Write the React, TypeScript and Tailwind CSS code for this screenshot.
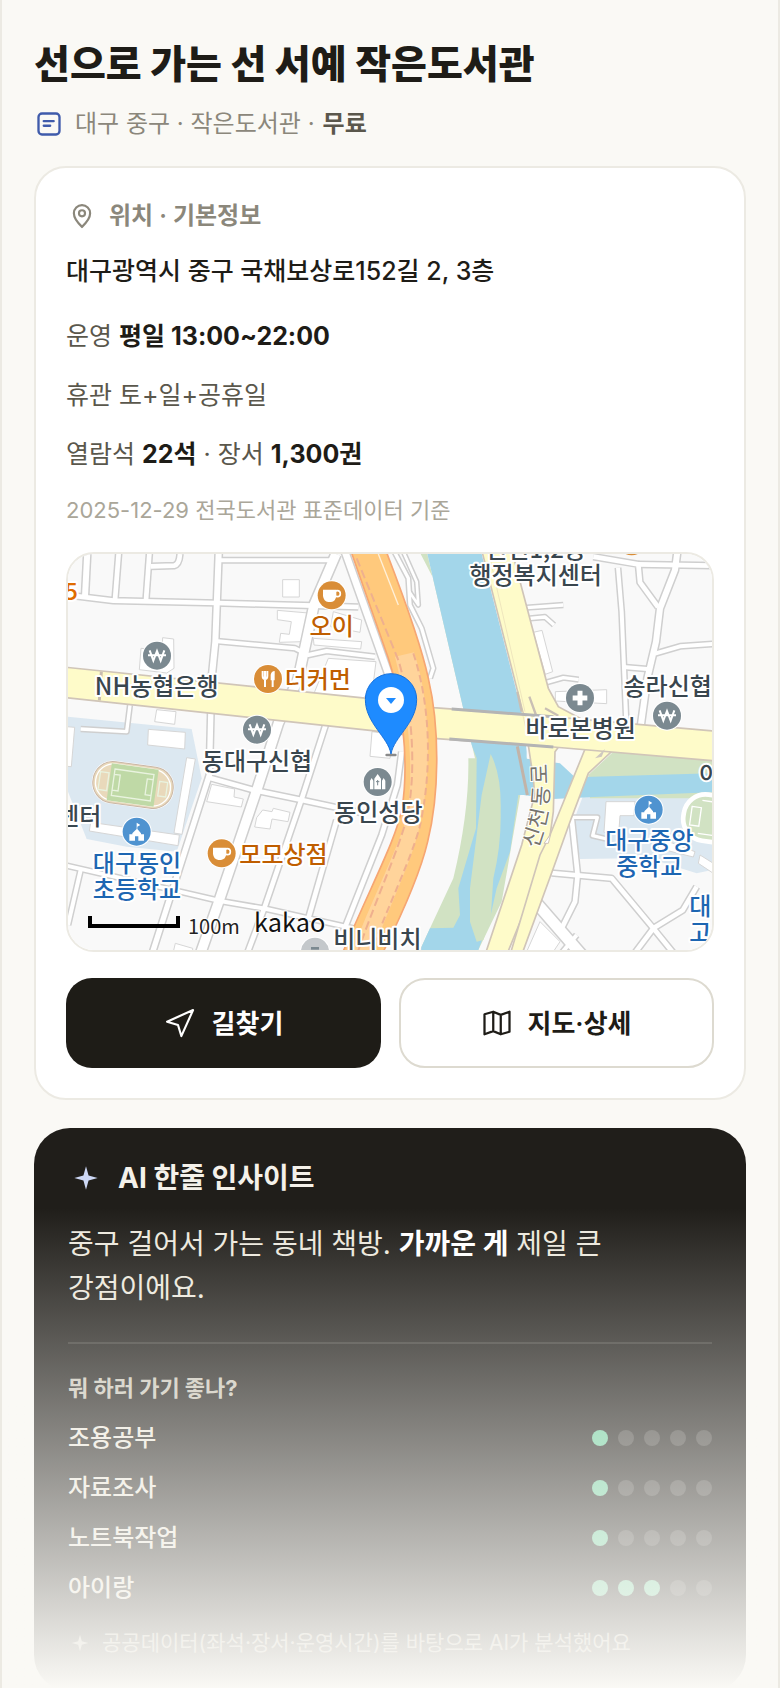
import React from "react";

type Road = [string, number];

const roads: Road[] = [
  ["M83 0L75 155", 18],
  ["M178 0L165 165", 14],
  ["M270 0L258 165", 14],
  ["M20 150L160 167L470 174L760 182L895 186", 14],
  ["M272 64L342 62Q358 58 360 27", 14],
  ["M477 0L466 290L455 400", 18],
  ["M480 46L810 46", 12],
  ["M465 288L705 310L745 330L800 318L945 335", 12],
  ["M453 480L448 690L275 1230", 16],
  ["M800 530L725 762L612 1092L560 1230", 14],
  ["M448 698L580 735L725 765L910 805", 14],
  ["M20 962L360 1040L480 1068L620 1092L880 1150", 12],
  ["M62 975L24 1140", 12],
  ["M830 825L745 1120", 14],
  ["M1025 620L1012 720L965 870L850 1160", 14],
  ["M855 20L990 400", 20],
  ["M1003 20L1045 100L1050 180L1085 250L1120 370L1110 400", 10],
  ["M1048 140L1075 180L1070 110L1030 20", 8],
  ["M210 480L200 560L62 552", 10],
  ["M1600 35L1735 58L1740 112L1794 186", 14],
  ["M1735 58L1960 62", 14],
  ["M1852 20L1845 75L1800 190L1788 290L1762 400L1740 560", 18],
  ["M1674 68L1685 200L1700 560", 12],
  ["M1690 366L1770 373", 12],
  ["M1785 326L1860 304L1960 297", 12],
  ["M1400 188L1510 180", 10],
  ["M1410 220L1455 216L1482 240", 10],
  ["M1460 412L1510 398L1556 404", 10],
  ["M1535 820L1553 990L1545 1070L1505 1150", 14],
  ["M1475 984L1655 1000L1780 1150L1845 1230", 14],
  ["M1720 1230L1780 1150L1868 1096L1910 1025", 14],
  ["M1500 1230L1550 1170", 12],
  ["M1535 817L1612 817L1598 872L1640 882", 10],
];

const wideRoads: Road[] = [
  ["M828 27L762 180L715 400L655 535L592 730L478 1065L420 1230", 28],
  ["M1430 1075L1565 1230", 32],
];

const buildings = [
  "M668 104H718V156H668Z",
  "M652 196L745 204L728 290L658 292L662 265L688 268L694 230L652 224Z",
  "M243 310L306 315L308 278L341 282L342 370L320 384L238 374Z",
  "M290 494L348 500L344 538L284 530Z",
  "M265 553L376 562L374 612L263 600Z",
  "M380 638L406 642L366 868L342 864Z",
  "M20 545L44 547L34 665L20 664Z",
  "M92 832L358 870L354 902L88 858Z",
  "M455 718L524 732L522 756L550 762L544 786L440 770Z",
  "M608 795L636 800L640 790L690 802L684 830L636 822L630 852L584 846L590 818Z",
  "M805 340L948 350L938 430L900 470L760 450Z",
  "M820 200L905 225L900 262L812 245Z",
  "M760 280L905 290L902 312L762 300Z",
  "M936 560L1000 568L990 640L930 634Z",
  "M1420 262L1446 256L1478 380L1456 388Z",
  "M1486 440L1640 434V476L1486 468Z",
  "M1638 770L1725 770L1722 812L1680 812L1676 868L1632 862Z",
  "M1800 880L1905 920L1900 936L1795 910Z",
  "M1920 930L1960 955V985L1915 955Z",
  "M1440 1130L1500 1190L1480 1220H1400Z",
  "M346 1195L398 1210V1220H340Z",
];

type LabelProps = { x: number; y: number; color?: string; anchor?: "start" | "middle" | "end"; children: string };

function Label({ x, y, color = "#39464e", anchor = "middle", children }: LabelProps) {
  return (
    <text
      x={x}
      y={y}
      fill={color}
      textAnchor={anchor}
      stroke="#fff"
      strokeWidth={12}
      strokeLinejoin="round"
      paintOrder="stroke"
      fontSize={72}
      className="font-['Noto_Sans_CJK_KR',sans-serif] font-medium"
    >
      {children}
    </text>
  );
}

function Poi({ x, y, color, children }: { x: number; y: number; color: string; children: React.ReactNode }) {
  return (
    <g transform={`translate(${x} ${y})`}>
      <circle r={45} fill="#fff" />
      <circle r={42} fill={color} />
      {children}
    </g>
  );
}

const Won = () => (
  <path d="M-22 -16L-11 15L0 -14L11 15L22 -16M-27 -1H27" fill="none" stroke="#fff" strokeWidth={6} />
);
const Cup = () => (
  <g>
    <path d="M-26 -17H14V2Q12 18 -2 20H-10Q-24 18 -26 2Z" fill="#fff" />
    <circle cx={17} cy={-5} r={9} fill="none" stroke="#fff" strokeWidth={5} />
  </g>
);
const School = () => (
  <path d="M0 -27V-8L-13 5V8H-22V27H-5V14H5V27H22V8H13V5L2 -8V-15L11 -20Z" fill="#fff" />
);
const Church = () => (
  <g>
    <path d="M0 -24L10 -10V22H-10V-10ZM-23 -4L-18 -12L-13 -4V22H-23ZM13 -4L18 -12L23 -4V22H13Z" fill="#fff" />
    <path d="M0 -6V10M-5 -1H5" stroke="#7b8990" strokeWidth={3} />
  </g>
);

function MapDrawing() {
  const grey = "#7b8990";
  const orange = "#d98d37";
  const blue = "#4f93d0";
  return (
    <svg viewBox="24 27 1932 1188" preserveAspectRatio="xMidYMid slice" className="block h-full w-full" role="img" aria-label="지도">
      <rect x={0} y={0} width={2000} height={1300} fill="#f9f9f9" />
      <path d="M24 515L395 552L425 700L350 920L200 905L80 882L24 740Z" fill="#dce8f1" />
      <path d="M1570 750L1956 745V975L1910 985L1800 950L1720 940L1560 942L1540 830Z" fill="#dce8f1" />
      <path d="M1082 27L1102 27L1205 470L1245 640H1225Q1228 800 1180 1000L1110 1150L1080 1215H1255L1325 1070L1400 640Z" fill="#d1e2c3" />
      <path d="M1102 27H1265L1390 520L1400 620L1400 750H1375L1350 920L1310 1030L1290 1120L1255 1215H1080L1110 1150L1180 1148L1200 1110L1195 1030L1248 850L1250 640L1235 600L1205 470Z" fill="#a3d6ea" />
      <path d="M1292 627Q1325 690 1322 800Q1324 900 1300 1000L1292 1120L1270 1185L1250 1190L1230 1130L1230 1030L1265 750Z" fill="#d1e2c3" />
      <path d="M1585 690L1660 620L1960 645V760H1590Z" fill="#d1e2c3" />
      <path d="M1390 640L1500 655L1545 697L1956 685V742L1600 756L1480 762L1390 750Z" fill="#a3d6ea" />
      <g fill="#fff" stroke="#d6d6d6" strokeWidth={3}>
        {buildings.map((d) => (
          <path key={d} d={d} />
        ))}
      </g>
      <g fill="none" stroke="#cfcfcf" strokeLinejoin="round">
        {[...roads, ...wideRoads].map(([d, w]) => (
          <path key={d} d={d} strokeWidth={w + 9} />
        ))}
      </g>
      <g fill="none" stroke="#fff" strokeLinejoin="round">
        {[...roads, ...wideRoads].map(([d, w]) => (
          <path key={d} d={d} strokeWidth={w} />
        ))}
      </g>

      <g transform="translate(219 720) rotate(8)">
        <rect x={-124} y={-65} width={248} height={130} rx={62} fill="#fff" />
        <rect x={-121} y={-62} width={242} height={124} rx={60} fill="#e9d9bb" stroke="#c9b6a6" strokeWidth={3} />
        <rect x={-113} y={-55} width={226} height={110} rx={54} fill="none" stroke="#fff" strokeWidth={4} />
        <rect x={-72} y={-56} width={142} height={112} fill="#bfd9a6" />
        <path d="M-60 -40H58V40H-60ZM-60 -24H-42V24H-60M58 -24H40V24H58M-102 -26H-76V28H-102ZM78 -22H102V22H78Z" fill="none" stroke="#e9f3df" strokeWidth={4} />
      </g>
      <g transform="translate(1950 820) rotate(8)">
        <rect x={-80} y={-70} width={190} height={140} rx={66} fill="#d1e2c3" stroke="#fff" strokeWidth={14} />
        <path d="M-58 -28H-30V28H-58ZM-30 -50H80M-30 50H80" fill="none" stroke="#fff" strokeWidth={4} />
      </g>

      <g stroke="#d0c5b8" strokeWidth={5} fill="#fefbc9">
        <path d="M1265 15L1392 515L1420 700L1424 750L1385 900L1275 1230H1340L1462 930L1480 800L1485 620L1560 520L1495 485L1465 430L1355 15Z" />
        <path d="M1580 600L1470 870L1440 930L1350 1230H1385L1480 970L1530 830L1585 685L1665 610V590Z" />
        <path d="M10 366L930 461L1120 488L1480 515L1530 520L1970 559V648L1480 606L1120 580L930 556L10 457Z" />
      </g>
      <path d="M1385 515L1545 524L1600 600L1415 596Z" fill="#fefbc9" />
      <path d="M1290 40L1395 500M1372 440L1400 560M1410 460L1430 520" fill="none" stroke="#efe6bd" strokeWidth={3} />
      <path d="M1408 455L1428 510M1455 490L1495 512M1372 440L1385 500" fill="none" stroke="#c9bfb4" strokeWidth={7} />
      <path d="M1175 492L1480 515M1168 582L1480 606" fill="none" stroke="#b4b4b4" strokeWidth={9} />
      <path d="M1372 604L1402 750" stroke="#c2b3a8" strokeWidth={9} />
      <path d="M124 380L118 466" stroke="#c9bcae" strokeWidth={9} />
      <path d="M1605 640L1635 612L1625 635Z" fill="#cfc8c0" />
      <path d="M1452 895L1472 868L1465 895Z" fill="#fff" stroke="#d0c5b8" strokeWidth={3} />

      <path d="M870 10L985 340C1022 450 1050 640 1026 790C1005 890 950 985 845 1230H965C1000 1160 1075 1010 1103 890C1140 740 1138 540 1105 400C1090 330 1060 230 975 10Z" fill="#ffc97c" stroke="#f6a673" strokeWidth={5} strokeLinejoin="round" />
      <path d="M1005 335L1062 322C1115 480 1115 700 1075 860C1050 960 985 1090 935 1230H872C930 1080 985 970 1030 850C1060 760 1062 560 1005 335Z" fill="#ffd49b" />
      <path d="M890 40L1015 345C1062 500 1068 700 1040 820C1010 930 960 1030 890 1230" fill="none" stroke="#efb08e" strokeWidth={6} strokeDasharray="26 12" />
      <path d="M1060 325C1115 490 1115 690 1078 850C1050 950 985 1080 930 1230" fill="none" stroke="#efb08e" strokeWidth={6} strokeDasharray="22 12" />
      <path d="M955 27L1015 180" stroke="#fff0d8" strokeWidth={4} />

      <Poi x={815} y={151} color={orange}><Cup /></Poi>
      <Poi x={624} y={402} color={orange}>
        <path d="M-16 -24V-10Q-16 0 -9 0V24M-9 -24V0M-2 -24V-10Q-2 0 -9 0M14 24V2" fill="none" stroke="#fff" strokeWidth={6} />
        <path d="M8 4V-12Q10 -24 20 -24V4Z" fill="#fff" />
      </Poi>
      <Poi x={485} y={925} color={orange}><Cup /></Poi>
      <Poi x={291} y={332} color={grey}><Won /></Poi>
      <Poi x={591} y={554} color={grey}><Won /></Poi>
      <Poi x={1821} y={512} color={grey}><Won /></Poi>
      <Poi x={1560} y={459} color={grey}><path d="M-22 0H22M0 -22V22" stroke="#fff" strokeWidth={15} /></Poi>
      <Poi x={953} y={711} color={grey}><Church /></Poi>
      <Poi x={230} y={860} color={blue}><School /></Poi>
      <Poi x={1766} y={794} color={blue}><School /></Poi>
      <Poi x={765} y={1220} color="#c4c8cb"><path d="M-12 -10H12" stroke="#7b8990" strokeWidth={8} /></Poi>
      <circle cx={1715} cy={-11} r={42} fill={orange} />

      <Label x={54} y={164} anchor="end" color="#e06c00">5</Label>
      <Label x={815} y={270} color="#c05e00">오이</Label>
      <Label x={674} y={429} anchor="start" color="#c05e00">더커먼</Label>
      <Label x={538} y={955} anchor="start" color="#c05e00">모모상점</Label>
      <Label x={290} y={451}>NH농협은행</Label>
      <Label x={591} y={674}>동대구신협</Label>
      <Label x={955} y={829}>동인성당</Label>
      <Label x={1427} y={40}>신천1,2동</Label>
      <Label x={1427} y={118}>행정복지센터</Label>
      <Label x={1823} y={451}>송라신협</Label>
      <Label x={1562} y={577}>바로본병원</Label>
      <Label x={124} y={841} anchor="end">센터</Label>
      <Label x={231} y={981} color="#1d66b2">대구동인</Label>
      <Label x={231} y={1059} color="#1d66b2">초등학교</Label>
      <Label x={1768} y={913} color="#1d66b2">대구중앙</Label>
      <Label x={1768} y={991} color="#1d66b2">중학교</Label>
      <Label x={1921} y={1111} color="#1d66b2">대</Label>
      <Label x={1921} y={1189} color="#1d66b2">고</Label>
      <Label x={1916} y={715} anchor="start">이</Label>
      <Label x={952} y={1208}>비니비치</Label>
      <g fill="#77756d" stroke="#fff" strokeWidth={6} paintOrder="stroke" fontSize={66} textAnchor="middle" className="font-['Noto_Sans_CJK_KR',sans-serif]">
        <text transform="translate(1442 884) rotate(-72)">신</text>
        <text transform="translate(1458 824) rotate(-78)">천</text>
        <text transform="translate(1466 754) rotate(-86)">동</text>
        <text transform="translate(1462 686) rotate(-92)">로</text>
      </g>

      <path d="M90 1113V1143H354V1113" fill="none" stroke="#000" strokeWidth={12} />
      <text x={384} y={1167} fontSize={60} fill="#222" stroke="#fff" strokeWidth={6} paintOrder="stroke" className="font-['Noto_Sans_CJK_KR',sans-serif]">100m</text>
      <text x={582} y={1160} fontSize={76} fill="#111" stroke="#fff" strokeWidth={6} paintOrder="stroke" className="font-['Noto_Sans_CJK_KR',sans-serif]">kakao</text>

      <rect x={976} y={626} width={34} height={8} rx={4} fill="#8a8a8a" />
      <path d="M993 627C984 575 916 535 916 463A77 77 0 0 1 1070 463C1070 535 1002 575 993 627Z" fill="#1e8bff" stroke="#1571dd" strokeWidth={3} />
      <circle cx={993} cy={465} r={39} fill="#fff" />
      <path d="M978 459H1008L993 477Z" fill="#1e8bff" />
    </svg>
  );
}

function Sparkle({ className }: { className: string }) {
  return (
    <svg viewBox="0 0 24 24" fill="currentColor" className={className} aria-hidden="true">
      <path d="M12 2L14.2 9.8L22 12L14.2 14.2L12 22L9.8 14.2L2 12L9.8 9.8Z" />
    </svg>
  );
}

const purposes = [
  { name: "조용공부", score: 1 },
  { name: "자료조사", score: 1 },
  { name: "노트북작업", score: 1 },
  { name: "아이랑", score: 3 },
];

export default function App() {
  return (
    <main className="relative h-screen overflow-hidden border-x-2 border-[#eceae3] bg-[#faf9f5] px-8 pt-10 font-['Inter','Noto_Sans_CJK_KR',sans-serif] break-keep text-[#1e1c17]">
      <h1 className="text-[39px] leading-[48px] font-extrabold">선으로 가는 선 서예 작은도서관</h1>
      <p className="mt-[18px] flex items-center pl-[1px] text-2xl leading-9 text-[#8b877b]">
        <svg viewBox="0 0 24 24" fill="none" stroke="#3f5bab" strokeWidth={2} strokeLinecap="round" className="mr-3 size-7" aria-hidden="true">
          <rect x={3} y={3} width={18} height={18} rx={3} />
          <path d="M7.5 9.5H16M7.5 13.5H13" />
        </svg>
        대구 중구 · 작은도서관 ·<b className="ml-2 font-semibold text-[#5a574c]">무료</b>
      </p>

      <section className="mt-6 rounded-[32px] border-2 border-[#eceae3] bg-white p-[30px]">
        <h2 className="flex items-center gap-[14px] pl-[3px] text-2xl leading-9 font-semibold text-[#8b877b]">
          <svg viewBox="0 0 24 24" fill="none" stroke="currentColor" strokeWidth={2} className="size-[26px]" aria-hidden="true">
            <path d="M12 22C12 22 19.500 15 19.500 9.500A7.500 7.500 0 0 0 4.500 9.500C4.500 15 12 22 12 22Z" />
            <circle cx={12} cy={9.5} r={2.8} />
          </svg>
          위치 · 기본정보
        </h2>
        <p className="mt-[17px] text-[25px] leading-10 font-medium">대구광역시 중구 국채보상로152길 2, 3층</p>
        <div className="mt-[25px] flex flex-col gap-[19px] text-[25px] leading-10 text-[#5a574c]">
          <p>운영 <b className="font-bold text-[#1e1c17]">평일 13:00~22:00</b></p>
          <p>휴관 토+일+공휴일</p>
          <p>열람석 <b className="font-bold text-[#1e1c17]">22석</b> · 장서 <b className="font-bold text-[#1e1c17]">1,300권</b></p>
        </div>
        <p className="mt-[18px] text-[22px] leading-9 text-[#aaa699]">2025-12-29 전국도서관 표준데이터 기준</p>
        <div className="mt-6 h-[400px] overflow-hidden rounded-[28px] border-2 border-[#eceae3]">
          <MapDrawing />
        </div>
        <div className="mt-[26px] grid grid-cols-2 gap-[18px] text-[26px] font-semibold">
          <button type="button" className="flex h-[90px] items-center justify-center gap-4 rounded-[26px] bg-[#1e1c17] text-white">
            <svg viewBox="0 0 24 24" fill="none" stroke="currentColor" strokeWidth={1.6} strokeLinejoin="round" className="size-8" aria-hidden="true">
              <path d="M2.300 11L21.800 2.300L13 21.800L10.500 13.500Z" />
            </svg>
            길찾기
          </button>
          <button type="button" className="flex h-[90px] items-center justify-center gap-4 rounded-[26px] border-2 border-[#dddad0]">
            <svg viewBox="0 0 24 24" fill="none" stroke="currentColor" strokeWidth={1.8} strokeLinejoin="round" className="size-[30px]" aria-hidden="true">
              <path d="M2 5L9 3L15 5.500L22 3V19L15 21L9 18.500L2 21ZM9 3V18.500M15 5.500V21" />
            </svg>
            지도·상세
          </button>
        </div>
      </section>

      <section className="mt-7 rounded-[36px] bg-[#201e1a] px-[34px] pt-[30px] pb-7 text-[#ece8dd]">
        <h2 className="flex items-center gap-[18px] pl-1 text-[28px] leading-10 font-bold text-[#f4f1ea]">
          <Sparkle className="size-7 text-[#cdd8f5]" />
          AI 한줄 인사이트
        </h2>
        <p className="mt-6 pr-16 text-[28px] leading-[44px]">
          중구 걸어서 가는 동네 책방. <b className="font-bold text-white">가까운 게</b> 제일 큰 강점이에요.
        </p>
        <hr className="mt-8 border-t-2 border-[#3a3833]" />
        <h3 className="mt-6 text-[22px] leading-10 font-bold text-[#c9c5b8]">뭐 하러 가기 좋나?</h3>
        <ul className="mt-[5px]">
          {purposes.map((p) => (
            <li key={p.name} className="flex h-[50px] items-center justify-between text-2xl font-medium">
              {p.name}
              <span className="flex gap-[10px]">
                {[1, 2, 3, 4, 5].map((n) => (
                  <i key={n} className={n <= p.score ? "size-4 rounded-full bg-[#6fcf9f]" : "size-4 rounded-full bg-[#45433f]"} />
                ))}
              </span>
            </li>
          ))}
        </ul>
        <p className="mt-[10px] flex items-center gap-3 pl-[2px] text-[21px] leading-10 text-[#b5b1a4]">
          <Sparkle className="size-5" />
          공공데이터(좌석·장서·운영시간)를 바탕으로 AI가 분석했어요
        </p>
      </section>
      <div className="pointer-events-none absolute inset-x-0 bottom-0 h-[480px] bg-linear-to-b from-[#faf9f5]/0 to-[#faf9f5]" />
    </main>
  );
}
